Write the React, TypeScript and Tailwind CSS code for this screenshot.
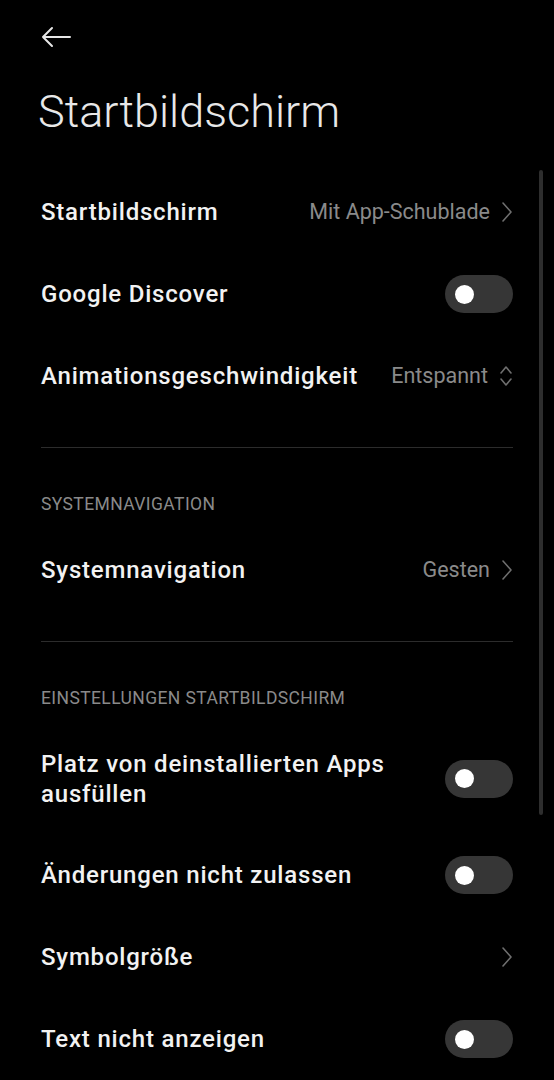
import React from "react";

const Toggle = () => (
  <div className="w-[68px] h-[38px] rounded-full bg-[#363636] flex items-center pl-[10px] shrink-0">
    <div className="w-[19px] h-[19px] rounded-full bg-white" />
  </div>
);

const Chevron = () => (
  <svg width="12" height="22" viewBox="0 0 12 22" fill="none" className="shrink-0">
    <path d="M2 2 L10 11 L2 20" stroke="#6f6f6f" strokeWidth="1.6" strokeLinecap="round" strokeLinejoin="round" />
  </svg>
);

const UpDown = () => (
  <svg width="14" height="24" viewBox="0 0 14 24" fill="none" className="shrink-0">
    <path d="M2 9 L7 3 L12 9" stroke="#6f6f6f" strokeWidth="1.6" strokeLinecap="round" strokeLinejoin="round" />
    <path d="M2 15 L7 21 L12 15" stroke="#6f6f6f" strokeWidth="1.6" strokeLinecap="round" strokeLinejoin="round" />
  </svg>
);

const Row = ({ label, value, right, tall }: { label: React.ReactNode; value?: string; right: React.ReactNode; tall?: boolean }) => (
  <div className={tall ? "flex items-center justify-between h-[111px]" : "flex items-center justify-between h-[82px]"}>
    <div className="text-[24px] leading-[30px] tracking-[0.8px] font-medium text-[#f2f2f2] pr-4">{label}</div>
    <div className="flex items-center gap-[11px]">
      {value && <span className="text-[21.5px] leading-[30px] text-[#8a8a8a]">{value}</span>}
      {right}
    </div>
  </div>
);

const Header = ({ children }: { children: string }) => (
  <div className="text-[17.5px] leading-[20px] tracking-[0.4px] text-[#8a8a8a] pt-[46px] pb-[15px]">{children}</div>
);

export default function App() {
  return (
    <div className="relative w-[554px] h-[1080px] overflow-hidden bg-black" style={{ fontFamily: "Roboto, 'Noto Sans', sans-serif" }}>
      <div className="absolute right-[11px] top-[170px] w-[4px] h-[645px] rounded-full bg-[#2e2e2e]" />
      <div className="px-[41px]">
        <div className="pt-[26px] h-[60px]">
          <svg width="30" height="22" viewBox="0 0 30 22" fill="none">
            <path d="M29 11 H2 M11 2 L2 11 L11 20" stroke="#e6e6e6" strokeWidth="2" strokeLinecap="round" strokeLinejoin="round" />
          </svg>
        </div>
        <div className="text-[45px] leading-[56px] font-light text-[#e8e8e8] -ml-[3px] pt-[24px] pb-[31px]">Startbildschirm</div>
        <Row label="Startbildschirm" value="Mit App-Schublade" right={<Chevron />} />
        <Row label="Google Discover" right={<Toggle />} />
        <Row label="Animationsgeschwindigkeit" value="Entspannt" right={<UpDown />} />
        <div className="h-[30px]" />
        <div className="h-px bg-[#2c2c2c]" />
        <Header>SYSTEMNAVIGATION</Header>
        <Row label="Systemnavigation" value="Gesten" right={<Chevron />} />
        <div className="h-[30px]" />
        <div className="h-px bg-[#2c2c2c]" />
        <Header>EINSTELLUNGEN STARTBILDSCHIRM</Header>
        <Row tall label={<>Platz von deinstallierten Apps<br />ausfüllen</>} right={<Toggle />} />
        <Row label="Änderungen nicht zulassen" right={<Toggle />} />
        <Row label="Symbolgröße" right={<Chevron />} />
        <Row label="Text nicht anzeigen" right={<Toggle />} />
      </div>
    </div>
  );
}
